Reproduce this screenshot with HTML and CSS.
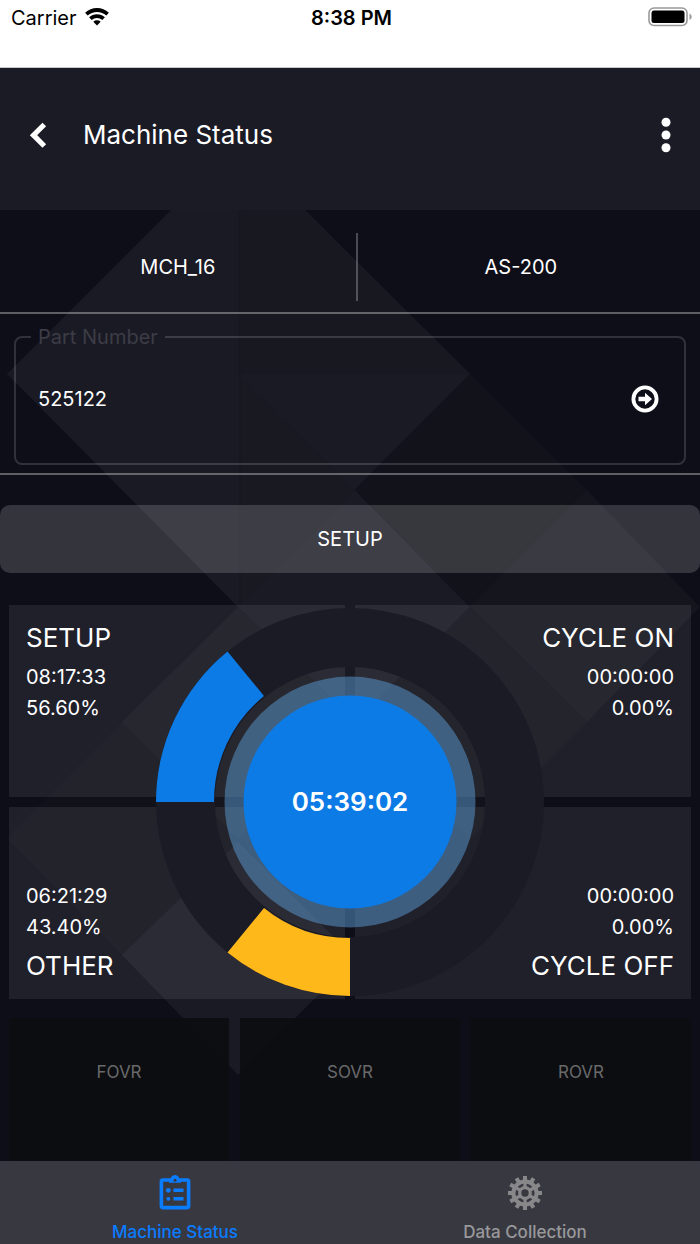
FILE: index.html
```html
<!DOCTYPE html>
<html lang="en">
<head>
<meta charset="utf-8">
<meta name="viewport" content="width=device-width, initial-scale=1">
<title>Machine Status</title>
<link rel="stylesheet" href="styles.css">
</head>
<body>
<div class="statusbar">
  <div class="carrier">Carrier
    <svg width="24" height="20" viewBox="0 0 24 20" fill="none" stroke="#000" stroke-width="3.800"><path d="M1.400 8.200a15.500 15.500 0 0 1 21.200 0"/><path d="M5.400 12.700a9.600 9.600 0 0 1 13.200 0"/><path d="M12 19.500l-3.700-3.700a5.400 5.400 0 0 1 7.400 0z" fill="#000" stroke="none"/></svg>
  </div>
  <div class="clock">8:38 PM</div>
  <svg class="battery" width="44" height="20" viewBox="0 0 44 20"><rect x="1" y="1" width="38" height="17.500" rx="5" fill="none" stroke="#999" stroke-width="1.600"/><rect x="3.500" y="3.500" width="33" height="12.500" rx="2.500"/><path d="M41.500 6.500q2.200 1 2.200 3.300t-2.200 3.300z" fill="#999"/></svg>
</div>
<header class="header">
  <button class="icon-button" aria-label="Back"><svg width="20" height="28" viewBox="0 0 20 28" fill="none" stroke="#fff" stroke-width="5.200"><path d="M16.300 3.500L5.500 14.200 16.300 25"/></svg></button>
  <h1 class="title">Machine Status</h1>
  <button class="icon-button" aria-label="More options"><svg width="12" height="36" viewBox="0 0 12 36" fill="#fff"><circle cx="6" cy="5.200" r="4.500"/><circle cx="6" cy="18" r="4.500"/><circle cx="6" cy="30.700" r="4.500"/></svg></button>
</header>
<main class="main">
  <svg class="pattern" viewBox="0 0 700 951" preserveAspectRatio="xMinYMin slice" aria-hidden="true">
    <path fill="#1a1a24" d="M171 0H305L470 164 238 397 7 164z"/>
    <path fill="#1a1a24" d="M238 397L355 280 470 397 355 512z"/>
    <path fill="#181820" d="M238 0H305L470 164H238z"/>
    <path fill="#191922" d="M238 164L355 280 238 397z"/>
    <path fill="#11121a" d="M470 164L587 280 470 397 355 280z"/>
    <path fill="#15151e" d="M587 280L700 397 587 512 470 397z"/>
    <path fill="#11121b" d="M470 397L587 512 470 629 355 512z"/>
    <path fill="#101119" d="M238 397L7 628 122 745 355 512z"/>
    <path fill="#15151e" d="M238 397L122 512 238 629 355 512z"/>
    <path fill="#11121a" d="M7 628L122 745 238 632z"/>
    <path fill="#1a1a24" d="M238 632L122 745 238 865 355 748z"/>
    <path stroke="#171720" stroke-width="2" d="M240 0V397"/>
  </svg>
  <section class="machine">
    <div class="machine-name">MCH_16</div>
    <div class="machine-name">AS-200</div>
  </section>
  <section class="part">
    <fieldset class="part-field">
      <legend><label for="part">Part Number</label></legend>
      <input id="part" type="text" value="525122">
      <button class="icon-button" aria-label="Submit part number"><svg width="28" height="28" viewBox="0 0 28 28"><circle cx="14" cy="14" r="11.600" fill="none" stroke="#fff" stroke-width="3.800"/><path fill="#fff" d="M7.500 11.800h6.500V7.800L21 14l-7 6.200v-4H7.500z"/></svg></button>
    </fieldset>
  </section>
  <button class="setup">SETUP</button>
  <section class="board">
    <div class="stat">
      <h2>SETUP</h2><p>08:17:33</p><p>56.60%</p>
    </div>
    <div class="stat right">
      <h2>CYCLE ON</h2><p>00:00:00</p><p>0.00%</p>
    </div>
    <div class="stat bottom">
      <p>06:21:29</p><p>43.40%</p><h2>OTHER</h2>
    </div>
    <div class="stat bottom right">
      <p>00:00:00</p><p>0.00%</p><h2>CYCLE OFF</h2>
    </div>
    <div class="dial">
      <svg width="388" height="388" viewBox="-194 -194 388 388" aria-hidden="true">
        <circle r="164.500" fill="none" stroke="#1b1b26" stroke-width="59"/>
        <path fill="#0c7be5" d="M-194 0A194 194 0 0 1-122.500-150.500L-86-106A136 136 0 0 0-136 0z"/>
        <path fill="#ffb81a" d="M0 194A194 194 0 0 1-122.500 150.500L-86 106A136 136 0 0 0 0 136z"/>
        <circle r="125.500" fill="#5b9cd4" fill-opacity=".5"/>
        <circle r="106.500" fill="#0c7be5"/>
      </svg>
      <div class="dial-time">05:39:02</div>
    </div>
  </section>
  <section class="overrides">
    <div class="override">FOVR</div>
    <div class="override">SOVR</div>
    <div class="override">ROVR</div>
  </section>
</main>
<nav class="tabs">
  <a class="tab active" href="#status">
    <svg width="36" height="36" viewBox="0 0 36 36" fill="none" stroke="#0a7cff" stroke-width="3.600"><rect x="4.400" y="5" width="27.200" height="27.600" rx="1.500"/><path fill="#0a7cff" stroke="none" d="M12 4.500C14 4.200 14 0 18 0s4 4.200 6 4.500v3.300H12z"/><circle cx="18" cy="5.200" r="1.500" fill="#383841" stroke="none"/><path stroke-width="3.400" d="M16.500 15.300h10M16.500 23.800h10"/><g fill="#0a7cff" stroke="none"><circle cx="11.300" cy="15.300" r="2.400"/><circle cx="11.300" cy="23.800" r="1.900"/></g></svg>
    <span>Machine Status</span>
  </a>
  <a class="tab" href="#data">
    <svg width="36" height="36" viewBox="-18 -18 36 36" fill="none" stroke="#88888a"><circle r="11.600" stroke-width="4"/><circle r="5.300" stroke-width="3.200"/><g stroke-width="4"><path d="M0-17V-12M0 17V12M-17 0H-12M17 0H12"/><path d="M0-17V-12M0 17V12M-17 0H-12M17 0H12" transform="rotate(30)"/><path d="M0-17V-12M0 17V12M-17 0H-12M17 0H12" transform="rotate(60)"/></g><g stroke-width="3.200"><path d="M0-12V-5M0 12V5"/><path d="M0-12V-5M0 12V5" transform="rotate(60)"/><path d="M0-12V-5M0 12V5" transform="rotate(120)"/></g></svg>
    <span>Data Collection</span>
  </a>
</nav>
</body>
</html>
```
FILE: styles.css
```css
* { box-sizing: border-box; }

body {
  margin: 0;
  min-height: 100vh;
  display: flex;
  flex-direction: column;
  background: #0e0e19;
  color: #fff;
  font-family: Inter, "Liberation Sans", sans-serif;
  font-size: 20px;
  line-height: 24px;
}

h1, h2, p { margin: 0; font-weight: 400; }

button { border: 0; padding: 0; color: inherit; font: inherit; }

svg { display: block; }

.icon-button { background: none; }

.statusbar {
  display: grid;
  grid-template-columns: 1fr auto 1fr;
  align-items: start;
  height: 68px;
  padding: 6px 8px 0 11px;
  background: #fff;
  border-bottom: 1px solid #c9c9cf;
  color: #000;
}

.carrier { display: flex; gap: 8px; }
.clock { font-weight: 600; }
.battery { justify-self: end; margin-top: 1px; }

.header {
  display: flex;
  align-items: center;
  height: 142px;
  padding: 0 28px 8px;
  background: #1b1b26;
}

.title { flex: 1; margin-left: 35px; font-size: 26px; line-height: 32px; }

.main {
  position: relative;
  isolation: isolate;
  flex: 1;
  display: flex;
  flex-direction: column;
  overflow: hidden;
}

.pattern {
  position: absolute;
  inset: 0;
  z-index: -1;
  width: 100%;
  height: 100%;
}

.machine {
  display: grid;
  grid-template-columns: 13fr 12fr;
  padding: 23px 16px 11px 0;
  border-bottom: 2px solid #ffffff55;
}

.machine-name {
  height: 68px;
  line-height: 68px;
  text-align: center;
}

.machine-name + .machine-name { border-left: 2px solid #ffffff40; }

.part { padding: 11px 14px 8px; border-bottom: 2px solid #ffffff55; }

.part-field {
  display: flex;
  align-items: center;
  height: 140px;
  margin: 0;
  padding: 0 25px 14px 15px;
  border: 2px solid #ffffff26;
  border-radius: 8px;
}

.part-field legend { padding: 0 7px; color: #3c3c46; }

.part-field input {
  flex: 1;
  min-width: 0;
  padding: 0 7px;
  border: 0;
  background: none;
  color: #fff;
  font: inherit;
}

.setup {
  height: 68px;
  margin-top: 30px;
  border-radius: 10px;
  background: #ffffff29;
}

.board {
  position: relative;
  display: grid;
  grid-template-columns: 1fr 1fr;
  grid-auto-rows: 192px;
  gap: 10px;
  margin: 32px 9px 0;
}

.stat {
  display: flex;
  flex-direction: column;
  padding: 15px 17px;
  background: #ffffff14;
}

.stat h2 { font-size: 26px; line-height: 36px; }
.stat p { line-height: 31px; }
.stat h2 + p { margin-top: 6px; }
.stat p + h2 { margin-top: 5px; }
.right { text-align: right; }
.bottom { justify-content: flex-end; }

.dial {
  position: absolute;
  inset: 0;
  display: grid;
  place-items: center;
}

.dial > * { grid-area: 1 / 1; }
.dial-time { position: relative; font-size: 26px; font-weight: 600; }

.overrides {
  flex: 1;
  display: grid;
  grid-template-columns: repeat(3, 1fr);
  gap: 11px;
  min-height: 143px;
  margin: 19px 9px 0;
}

.override {
  padding-top: 42px;
  background: #0c0d0fe6;
  color: #69696b;
  font-size: 17px;
  text-align: center;
}

.tabs {
  display: grid;
  grid-template-columns: 1fr 1fr;
  height: 83px;
  background: #383841;
}

.tab {
  display: flex;
  flex-direction: column;
  align-items: center;
  gap: 9px;
  padding-top: 14px;
  color: #98989a;
  font-size: 17px;
  font-weight: 500;
  text-decoration: none;
}

.tab.active { color: #0a7cff; }
```
